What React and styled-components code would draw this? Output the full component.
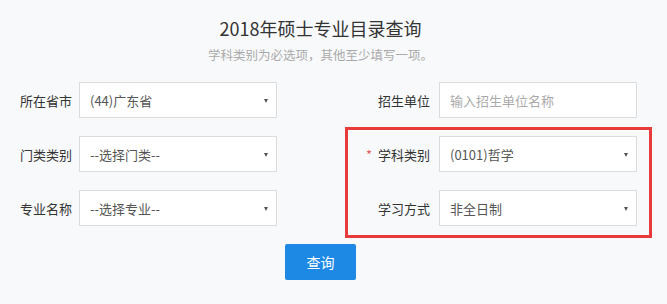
import React from "react";
import styled, { createGlobalStyle } from "styled-components";

const GlobalStyle = createGlobalStyle`
  body {
    margin: 0;
    background: #f8f9fb;
    font-family: "Microsoft YaHei", "Noto Sans CJK SC", "Noto Sans", sans-serif;
  }
`;

const Page = styled.div`
  width: 641px;
  padding-top: 16px;
  display: flex;
  flex-direction: column;
  align-items: center;
`;

const Title = styled.h1`
  margin: 0;
  font-size: 18px;
  line-height: 24px;
  font-weight: 400;
  color: #333;
`;

const Tip = styled.p`
  margin: 6px 0 0;
  font-size: 12.5px;
  line-height: 18px;
  color: #aaa;
`;

const Form = styled.div`
  align-self: stretch;
  margin-top: 18px;
  display: flex;
  align-items: flex-start;
`;

const Column = styled.div`
  display: flex;
  flex-direction: column;
  gap: ${(p) => (p.$gap === undefined ? 18 : p.$gap)}px;
  margin-left: ${(p) => p.$offset || 0}px;
`;

const Field = styled.div`
  display: grid;
  grid-template-columns: ${(p) => p.$labelWidth}px 198px;
  column-gap: ${(p) => p.$gap}px;
  align-items: center;
  padding-left: ${(p) => p.$indent || 0}px;
`;

const Label = styled.label`
  text-align: right;
  font-size: 13px;
  color: #333;
  white-space: nowrap;
`;

const Star = styled.span`
  color: #e35d5d;
  margin-right: 6px;
`;

const Highlight = styled.div`
  margin-top: 9px;
  border: 3px solid #e83c3c;
  padding: 6px 12px 9px 0;
  display: flex;
  flex-direction: column;
  gap: 18px;
`;

const SelectBox = styled.div`
  position: relative;
  height: 36px;
  box-sizing: border-box;
  border: 1px solid #dcdcdc;
  background: #fff;
  padding: 0 20px 0 10px;
  display: flex;
  align-items: center;
  font-size: 13px;
  color: #555;
  &::after {
    content: "";
    position: absolute;
    right: 8px;
    top: 16px;
    border-left: 2.5px solid transparent;
    border-right: 2.5px solid transparent;
    border-top: 4px solid #555;
  }
`;

const TextInput = styled.input`
  height: 36px;
  box-sizing: border-box;
  width: 100%;
  border: 1px solid #dcdcdc;
  background: #fff;
  padding: 0 10px;
  font: inherit;
  font-size: 13px;
  color: #555;
  outline: none;
  &::placeholder {
    color: #aaa;
  }
`;

const SearchButton = styled.button`
  margin-top: 6px;
  width: 71px;
  height: 36px;
  border: 0;
  border-radius: 2px;
  background: #1e88e5;
  color: #fff;
  font: inherit;
  font-size: 14px;
  cursor: pointer;
`;

function Select({ value }) {
  return <SelectBox>{value}</SelectBox>;
}

export default function App() {
  return (
    <>
      <GlobalStyle />
      <Page>
        <Title>2018年硕士专业目录查询</Title>
        <Tip>学科类别为必选项，其他至少填写一项。</Tip>
        <Form>
          <Column>
            <Field $labelWidth={72} $gap={7}>
              <Label>所在省市</Label>
              <Select value="(44)广东省" />
            </Field>
            <Field $labelWidth={72} $gap={7}>
              <Label>门类类别</Label>
              <Select value="--选择门类--" />
            </Field>
            <Field $labelWidth={72} $gap={7}>
              <Label>专业名称</Label>
              <Select value="--选择专业--" />
            </Field>
          </Column>
          <Column $offset={68} $gap={0}>
            <Field $labelWidth={82} $gap={9} $indent={3}>
              <Label>招生单位</Label>
              <TextInput placeholder="输入招生单位名称" />
            </Field>
            <Highlight>
              <Field $labelWidth={82} $gap={9}>
                <Label>
                  <Star>*</Star>学科类别
                </Label>
                <Select value="(0101)哲学" />
              </Field>
              <Field $labelWidth={82} $gap={9}>
                <Label>学习方式</Label>
                <Select value="非全日制" />
              </Field>
            </Highlight>
          </Column>
        </Form>
        <SearchButton>查询</SearchButton>
      </Page>
    </>
  );
}
